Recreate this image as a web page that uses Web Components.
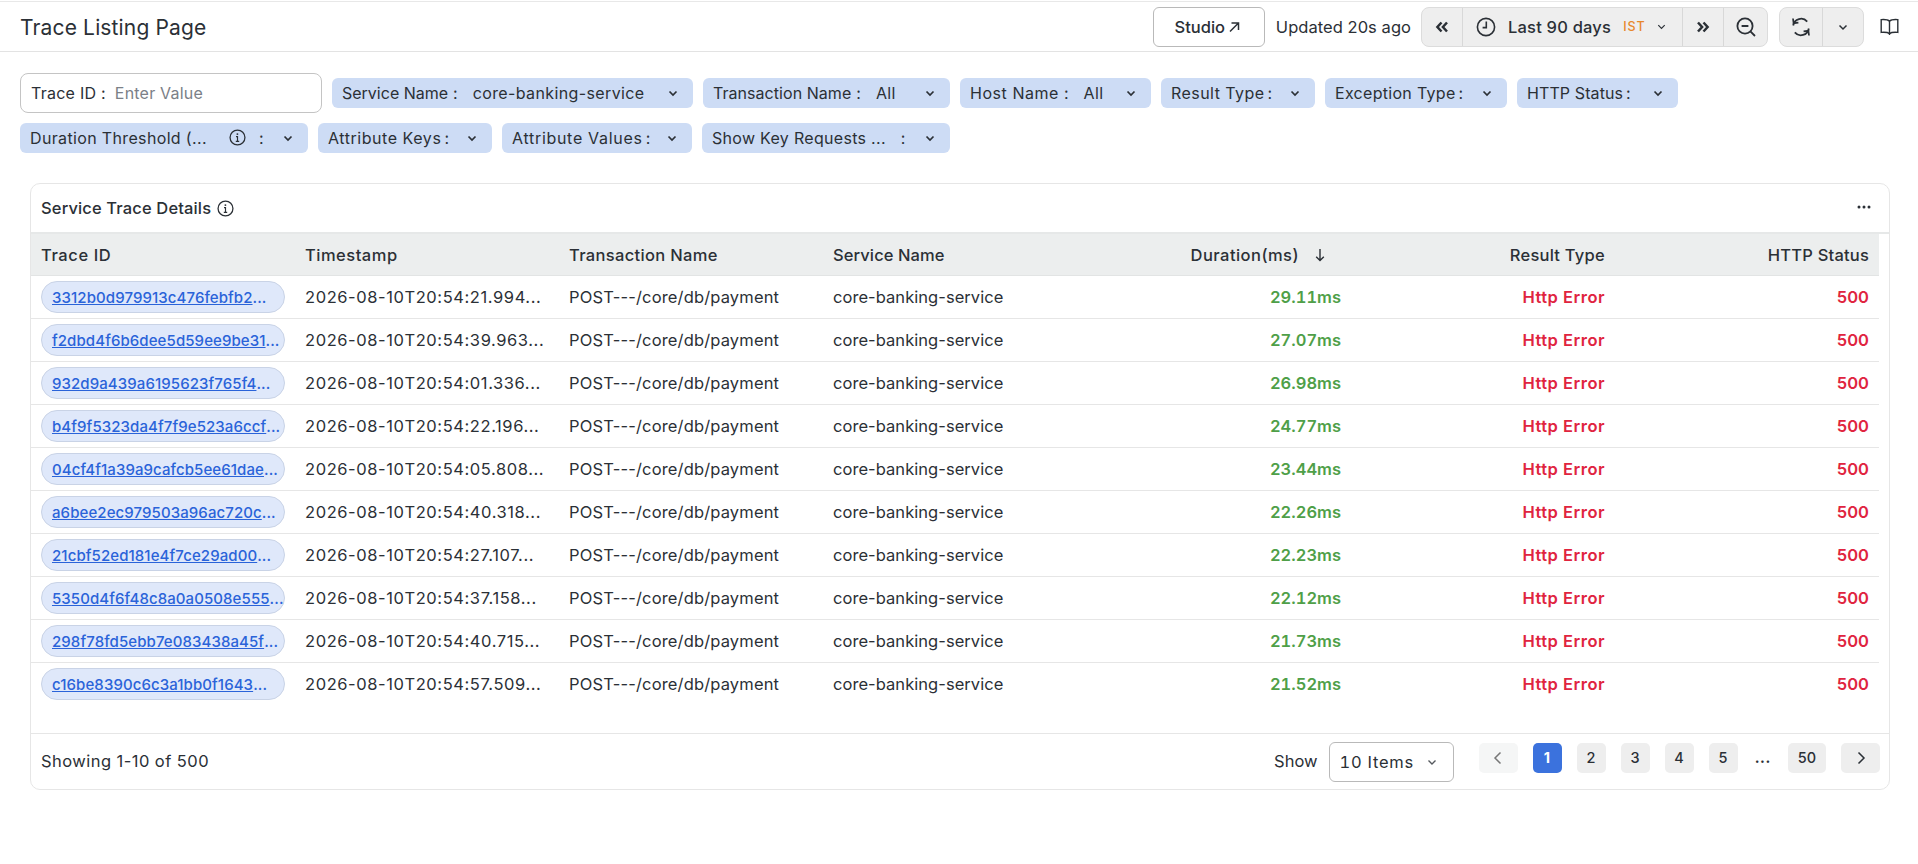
<!doctype html>
<html>
<head>
<meta charset="utf-8">
<title>Trace Listing Page</title>
<style>
    html, body {
        margin: 0;
        background: #fff;
        color: #2b3036;
        font: 400 16.5px Inter, "Noto Sans", sans-serif;
    }
</style>
</head>
<body>

<page-header heading="Trace Listing Page"></page-header>

<filter-bar>
    <filter-input label="Trace ID" placeholder="Enter Value" style="width:302px"></filter-input>
    <filter-chip label="Service Name" value="core-banking-service" spacing="0" style="width:361px"></filter-chip>
    <filter-chip label="Transaction Name" value="All" spacing=".05" style="width:247px"></filter-chip>
    <filter-chip label="Host Name" value="All" spacing=".55" style="width:191px"></filter-chip>
    <filter-chip label="Result Type" spacing=".45" style="width:154px"></filter-chip>
    <filter-chip label="Exception Type" spacing=".3" style="width:182px"></filter-chip>
    <filter-chip label="HTTP Status" spacing=".1" style="width:161px"></filter-chip>
    <filter-chip label="Duration Threshold (..." info spacing=".35" style="width:288px"></filter-chip>
    <filter-chip label="Attribute Keys" spacing=".55" style="width:174px"></filter-chip>
    <filter-chip label="Attribute Values" spacing=".7" style="width:190px"></filter-chip>
    <filter-chip label="Show Key Requests ..." wide-colon spacing=".3" style="width:248px"></filter-chip>
</filter-bar>

<trace-card heading="Service Trace Details">
    <trace-table></trace-table>
    <table-pager></table-pager>
</trace-card>

<script>
    const chevron = (size, color = 'currentColor', width = 1.6) =>
        `<svg width="${size}" height="${size}" viewBox="0 0 12 12" fill="none" stroke="${color}" stroke-width="${width}"><path d="M2.5 4.5 6 8l3.5-3.5"/></svg>`

    const infoIcon = size =>
        `<svg width="${size}" height="${size}" viewBox="0 0 16 16" fill="none" stroke="#2b3036" stroke-width="1.2"><circle cx="8" cy="8" r="7"/><path d="M6.6 7.2H8v4.4M6.4 11.6h3.2" stroke-width="1.1"/><circle cx="7.9" cy="4.8" r=".9" fill="#2b3036" stroke="none"/></svg>`

    customElements.define('page-header', class PageHeader extends HTMLElement {
        connectedCallback() {
            const root = this.attachShadow({mode: 'open'})
            root.innerHTML = `
            <style>
                :host {
                    display: flex;
                    align-items: center;
                    height: 49px;
                    margin-top: 1px;
                    padding: 0 19px 0 20px;
                    border-top: 1px solid #e8e8e8;
                    border-bottom: 1px solid #e3e3e3;
                }
                h1 { margin: 0; padding-top: 1px; font: 400 21px Inter, sans-serif; letter-spacing: .15px; color: #2b3036; }
                .right { margin-left: auto; display: flex; align-items: center; }
                .studio {
                    box-sizing: border-box;
                    width: 112px;
                    height: 40px;
                    margin-right: 11px;
                    padding: 1px 3px 0 0;
                    display: flex;
                    align-items: center;
                    justify-content: center;
                    gap: 3px;
                    border: 1px solid #b9b9b9;
                    border-radius: 6px;
                    font-weight: 500;
                    font-size: 16.5px;
                }
                .updated { margin-right: 10px; padding-top: 1px; white-space: nowrap; letter-spacing: .05px; }
                .group {
                    display: flex;
                    height: 38px;
                    background: #eeeeee;
                    border: 1px solid #dcdcdc;
                    border-radius: 8px;
                }
                .group > div {
                    box-sizing: border-box;
                    display: flex;
                    align-items: center;
                    justify-content: center;
                    border-right: 1px solid #d8d8d8;
                }
                .group > div:last-child { border-right: 0; }
                .range { justify-content: flex-start !important; padding-left: 13px; font-weight: 500; letter-spacing: .2px; }
                .range svg:first-child { margin-right: 12px; }
                .ist { margin: 0 10px 0 12px; font-size: 12.5px; color: #e8872b; letter-spacing: 1px; }
                .book { margin-left: 16px; display: flex; }
            </style>
            <h1>${this.getAttribute('heading')}</h1>
            <div class="right">
                <div class="studio"><span>Studio</span>
                    <svg width="12" height="12" viewBox="0 0 12 12" fill="none" stroke="currentColor" stroke-width="1.5"><path d="M2 10.5 10 2.5M3.5 2H10.5V9"/></svg>
                </div>
                <div class="updated">Updated 20s ago</div>
                <div class="group" style="margin-right:11px">
                    <div style="width:41px">
                        <svg width="14" height="12" viewBox="0 0 14 12" fill="none" stroke="#2b3036" stroke-width="2.5"><path d="M6.5 1.5 2.4 6l4.1 4.5M12 1.5 7.9 6l4.1 4.5"/></svg>
                    </div>
                    <div class="range" style="width:220px">
                        <svg width="20" height="20" viewBox="0 0 20 20" fill="none" stroke="#2b3036" stroke-width="1.6"><circle cx="10" cy="10" r="8.6"/><path d="M10.3 4.6V10.6H6.6"/></svg>
                        <span>Last 90 days</span>
                        <span class="ist">IST</span>
                        ${chevron(11, '#2b3036', 1.3)}
                    </div>
                    <div style="width:41px">
                        <svg width="14" height="12" viewBox="0 0 14 12" fill="none" stroke="#2b3036" stroke-width="2.5"><path d="M2 1.5 6.1 6 2 10.5M7.5 1.5 11.6 6l-4.1 4.5"/></svg>
                    </div>
                    <div style="width:43px">
                        <svg width="22" height="22" viewBox="0 0 22 22" fill="none" stroke="#2b3036" stroke-width="1.8"><circle cx="10" cy="10" r="7.6"/><path d="M6.6 10h6.8M15.4 15.4 20 20"/></svg>
                    </div>
                </div>
                <div class="group">
                    <div style="width:43px">
                        <svg width="22" height="24" viewBox="0 0 22 24" fill="none" stroke="#2b3036" stroke-width="1.8"><path d="M3.2 10.5A8 8 0 0 1 17.2 6.6M18.8 13.5A8 8 0 0 1 4.8 17.4"/><path d="M3 3.5 3.6 8.2 8.4 7.6M19 20.5 18.4 15.8 13.6 16.4" stroke-width="1.7"/></svg>
                    </div>
                    <div style="width:40px">${chevron(12, '#2b3036', 1.5)}</div>
                </div>
                <div class="book">
                    <svg width="19" height="20" viewBox="0 0 19 20" fill="none" stroke="#2b3036" stroke-width="1.4"><path d="M9.5 4.2C8 2.6 5 2.3 1.2 2.6V15.4C5 15.1 8 15.4 9.5 16.6 11 15.4 14 15.1 17.8 15.4V2.6C14 2.3 11 2.6 9.5 4.2ZM9.5 4.2V18"/></svg>
                </div>
            </div>`
        }
    })

    customElements.define('filter-bar', class FilterBar extends HTMLElement {
        constructor() {
            super()
            this.attachShadow({mode: 'open'}).innerHTML = `
            <style>
                :host {
                    display: flex;
                    flex-wrap: wrap;
                    align-items: center;
                    gap: 10px;
                    padding: 21px 20px 0;
                }
            </style>
            <slot></slot>`
        }
    })

    customElements.define('filter-input', class FilterInput extends HTMLElement {
        connectedCallback() {
            this.attachShadow({mode: 'open'}).innerHTML = `
            <style>
                :host {
                    box-sizing: border-box;
                    display: flex;
                    align-items: center;
                    height: 40px;
                    padding: 0 10px;
                    border: 1px solid #c4c4c4;
                    border-radius: 8px;
                    background: #fff;
                    font-size: 16px;
                }
                b { font-weight: 400; margin-right: 9px; white-space: nowrap; letter-spacing: .25px; }
                span { color: #7b8087; white-space: nowrap; letter-spacing: .2px; }
            </style>
            <b>${this.getAttribute('label')} :</b>
            <span>${this.getAttribute('placeholder')}</span>`
        }
    })

    customElements.define('filter-chip', class FilterChip extends HTMLElement {
        connectedCallback() {
            const value = this.getAttribute('value')
            const info = this.hasAttribute('info')
            const wide = this.hasAttribute('wide-colon')
            const spacing = this.getAttribute('spacing') || 0
            this.attachShadow({mode: 'open'}).innerHTML = `
            <style>
                :host {
                    box-sizing: border-box;
                    display: flex;
                    align-items: center;
                    height: 30px;
                    padding: 0 14px 1px 10px;
                    border-radius: 6px;
                    background: #cddcf5;
                    white-space: nowrap;
                    font-size: 16px;
                }
                .label { letter-spacing: ${spacing}px; }
                .colon { margin-left: ${info ? 13 : wide ? 15 : value ? 5 : 3}px; }
                .value { margin-left: 15px; letter-spacing: .38px; }
                .info { margin-left: 22px; display: flex; }
                .arrow { margin-left: auto; display: flex; }
            </style>
            <span class="label">${this.getAttribute('label')}</span>
            ${info ? `<span class="info">${infoIcon(17)}</span>` : ''}
            <span class="colon">:</span>
            ${value ? `<span class="value">${value}</span>` : ''}
            <span class="arrow">${chevron(12, '#2b3036', 1.7)}</span>`
        }
    })

    customElements.define('trace-card', class TraceCard extends HTMLElement {
        connectedCallback() {
            this.attachShadow({mode: 'open'}).innerHTML = `
            <style>
                :host {
                    display: block;
                    margin: 30px 28px 0 30px;
                    border: 1px solid #e6e6e6;
                    border-radius: 10px;
                }
                .title {
                    display: flex;
                    align-items: center;
                    gap: 6px;
                    height: 48px;
                    padding: 0 18px 0 10px;
                    box-sizing: border-box;
                    font-weight: 500;
                    font-size: 16.5px;
                    letter-spacing: .14px;
                }
                .title svg:last-child { margin-left: auto; margin-bottom: 3px; }
                .rule { height: 2px; background: #e6e8e8; }
            </style>
            <div class="title">
                <span>${this.getAttribute('heading')}</span>
                ${infoIcon(17)}
                <svg width="14" height="4" viewBox="0 0 14 4" fill="#2b3036"><circle cx="2" cy="2" r="1.5"/><circle cx="7" cy="2" r="1.5"/><circle cx="12" cy="2" r="1.5"/></svg>
            </div>
            <div class="rule"></div>
            <slot></slot>`
        }
    })

    customElements.define('trace-chip', class TraceChip extends HTMLElement {
        constructor() {
            super()
            this.attachShadow({mode: 'open'}).innerHTML = `
            <style>
                :host {
                    box-sizing: border-box;
                    display: flex;
                    align-items: center;
                    width: 244px;
                    height: 32px;
                    padding: 0 10px;
                    border: 1px solid #c9d3e6;
                    border-radius: 16px;
                    background: #dfe8fa;
                    color: #2a63d9;
                    font-size: 15px;
                    font-weight: 500;
                    letter-spacing: .09px;
                    white-space: nowrap;
                }
                a { color: inherit; text-decoration: underline; }
            </style>
            <a href="#"><slot></slot></a><span>...</span>`
        }
    })

    customElements.define('trace-row', class TraceRow extends HTMLElement {
        connectedCallback() {
            const root = this.attachShadow({mode: 'open'})
            root.innerHTML = `
            <style>
                :host {
                    display: grid;
                    grid-template-columns: repeat(7, 264px);
                    height: 43px;
                    box-sizing: border-box;
                    border-bottom: 1px solid #e6e6e6;
                    white-space: nowrap;
                }
                :host(:last-of-type) { border-bottom-color: transparent; }
                div { display: flex; align-items: center; padding: 0 10px; }
                .num { justify-content: flex-end; font-weight: 600; }
                .ts { letter-spacing: .58px; }
                .tx { letter-spacing: .15px; }
                .sv { letter-spacing: .05px; }
                .green { color: #4f9f48; font-variant-numeric: tabular-nums; }
                .red { color: #e0243f; }
                .err { letter-spacing: .5px; }
            </style>
            <div><trace-chip>${this.getAttribute('trace')}</trace-chip></div>
            <div class="ts">${this.getAttribute('ts')}...</div>
            <div class="tx">POST---/core/db/payment</div>
            <div class="sv">core-banking-service</div>
            <div class="num green">${this.getAttribute('dur')}ms</div>
            <div class="num red err">Http Error</div>
            <div class="num red">500</div>`
        }
    })

    const traces = [
        ['3312b0d979913c476febfb2', '21.994', '29.11'],
        ['f2dbd4f6b6dee5d59ee9be31', '39.963', '27.07'],
        ['932d9a439a6195623f765f4', '01.336', '26.98'],
        ['b4f9f5323da4f7f9e523a6ccf', '22.196', '24.77'],
        ['04cf4f1a39a9cafcb5ee61dae', '05.808', '23.44'],
        ['a6bee2ec979503a96ac720c', '40.318', '22.26'],
        ['21cbf52ed181e4f7ce29ad00', '27.107', '22.23'],
        ['5350d4f6f48c8a0a0508e555', '37.158', '22.12'],
        ['298f78fd5ebb7e083438a45f', '40.715', '21.73'],
        ['c16be8390c6c3a1bb0f1643', '57.509', '21.52']
    ]

    customElements.define('trace-table', class TraceTable extends HTMLElement {
        connectedCallback() {
            const rows = traces.map(t =>
                `<trace-row trace="${t[0]}" ts="2026-08-10T20:54:${t[1]}" dur="${t[2]}"></trace-row>`).join('')
            this.attachShadow({mode: 'open'}).innerHTML = `
            <style>
                :host { display: block; width: 1848px; padding-bottom: 27px; }
                .head {
                    display: grid;
                    grid-template-columns: repeat(7, 264px);
                    height: 42px;
                    box-sizing: border-box;
                    background: #eceeee;
                    border-bottom: 1px solid #e2e4e4;
                    font-weight: 500;
                    white-space: nowrap;
                    letter-spacing: .33px;
                }
                .head div { display: flex; align-items: center; padding: 0 10px; }
                .head .end { justify-content: flex-end; }
                .head svg { margin: 0 16px 0 16px; }
            </style>
            <div class="head">
                <div style="letter-spacing:.6px">Trace ID</div>
                <div style="letter-spacing:.5px">Timestamp</div>
                <div>Transaction Name</div>
                <div style="letter-spacing:.1px">Service Name</div>
                <div class="end" style="letter-spacing:.45px">Duration(ms)<svg width="10" height="14" viewBox="0 0 10 14" fill="none" stroke="#2b3036" stroke-width="1.4"><path d="M5 1v11.5M1.2 8.8 5 12.6l3.8-3.8"/></svg></div>
                <div class="end" style="letter-spacing:.25px">Result Type</div>
                <div class="end" style="letter-spacing:.2px">HTTP Status</div>
            </div>
            ${rows}`
        }
    })

    customElements.define('table-pager', class TablePager extends HTMLElement {
        connectedCallback() {
            const page = (label, cls = '') => `<span class="btn ${cls}">${label}</span>`
            this.attachShadow({mode: 'open'}).innerHTML = `
            <style>
                :host {
                    display: flex;
                    align-items: center;
                    height: 56px;
                    box-sizing: border-box;
                    padding: 0 9px 0 10px;
                    border-top: 1px solid #e6e6e6;
                    white-space: nowrap;
                }
                .count { letter-spacing: .45px; margin-bottom: 1px; }
                .show { margin-left: auto; margin-right: 11px; margin-bottom: 1px; }
                .select {
                    box-sizing: border-box;
                    display: flex;
                    align-items: center;
                    width: 125px;
                    height: 40px;
                    padding: 0 15px 0 10px;
                    border: 1px solid #b9b9b9;
                    border-radius: 6px;
                    font-variant-numeric: tabular-nums;
                    letter-spacing: .75px;
                }
                .select svg { margin-left: auto; }
                .pages { display: flex; gap: 15px; margin: 0 0 8px 25px; }
                .btn {
                    box-sizing: border-box;
                    display: flex;
                    align-items: center;
                    justify-content: center;
                    width: 29px;
                    height: 30px;
                    border-radius: 5px;
                    background: #eeeeee;
                    font-size: 14.5px;
                    font-weight: 500;
                }
                .arrow { width: 39px; }
                .off { background: #f5f6f6; }
                .on { background: #3b72dd; color: #fff; font-weight: 700; }
                .wide { width: 38px; }
                .gap { width: 20.5px; background: none; font-weight: 700; letter-spacing: .5px; }
            </style>
            <span class="count">Showing 1-10 of 500</span>
            <span class="show">Show</span>
            <div class="select"><span>10 Items</span>${chevron(12, '#55595e', 1.4)}</div>
            <div class="pages">
                ${page('<svg width="10" height="14" viewBox="0 0 10 14" fill="none" stroke="#777" stroke-width="1.5"><path d="M7.5 1.5 2 7l5.5 5.5"/></svg>', 'arrow off')}
                ${page('1', 'on')}
                ${page('2')}
                ${page('3')}
                ${page('4')}
                ${page('5')}
                ${page('...', 'gap')}
                ${page('50', 'wide')}
                ${page('<svg width="10" height="14" viewBox="0 0 10 14" fill="none" stroke="#2b3036" stroke-width="1.5"><path d="M2.5 1.5 8 7l-5.5 5.5"/></svg>', 'arrow')}
            </div>`
        }
    })
</script>
</body>
</html>
